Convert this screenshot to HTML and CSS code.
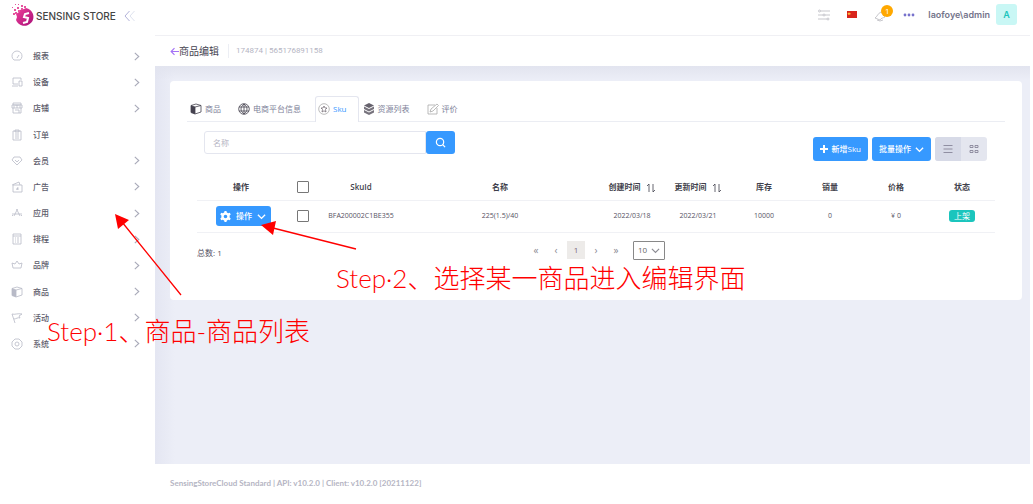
FILE: index.html
```html
<!DOCTYPE html>
<html lang="zh-CN">
<head>
<meta charset="utf-8">
<title>商品编辑 - Sensing Store</title>
<link rel="stylesheet" href="styles.css">
</head>
<body>
<svg class="defs" aria-hidden="true">
  <symbol id="right" viewBox="0 0 8 8"><path d="M2.500 .8 6 4 2.500 7.200"/></symbol>
  <symbol id="down" viewBox="0 0 8 8"><path d="M.8 2.500 4 5.700 7.200 2.500"/></symbol>
  <symbol id="box" viewBox="0 0 12 12"><path d="M1 2.500 5 4v7L1 9.500z" fill="currentColor"/><path d="M1 2.500 6 1l5 1.500L5 4M11 2.500v6.500L5 11"/></symbol>
  <symbol id="sort" viewBox="0 0 10 10"><path d="M3 9V1M1 3l2-2M7 1v8M9 7 7 9"/></symbol>
</svg>
<div class="app">
  <aside class="sidebar">
    <div class="brand">
      <svg class="logo" viewBox="0 0 24 24" aria-hidden="true">
        <defs><linearGradient id="pink" x1="0" y1="0" x2="1" y2="1"><stop offset="0" stop-color="#f0409a"/><stop offset="1" stop-color="#a80f78"/></linearGradient></defs>
        <path d="M4 10l3-2 1-2 4-1 2-1a9 9 0 1 1-10 12l1-3z" fill="url(#pink)"/>
        <path d="M2 5h2v2H2zM5 3h2v2H5zM9 1h2v2H9zM6 6h2v2H6zM1 9h2v2H1zM12 2h2v2h-2zM3 0h1v1H3zM6 0h1v1H6zM0 3h1v1H0zM3 8h2v2H3zM9 4h2v2H9z" fill="#e6559f"/>
        <path d="M17 9l-4 1 -1 3 4 1 -1 4-4 1" fill="none" stroke="#fff" stroke-width="2"/>
      </svg>
      <span class="brand-name">SENSING STORE</span>
      <button class="collapse" aria-label="收起菜单"><svg viewBox="0 0 12 12"><path d="M5.500 1 1 6l4.500 5"/><path class="faint" d="M10.500 1 6 6l4.500 5"/></svg></button>
    </div>
    <nav class="menu">
      <a href="#"><svg viewBox="0 0 12 12"><path d="M3 10a5 5 0 1 1 6 0zM6 8l2-3"/></svg><span>报表</span><svg class="chev"><use href="#right"/></svg></a>
      <a href="#"><svg viewBox="0 0 12 12"><path d="M2 8V2h8v2M1 10h6M2 8h5M8 5h3v5H8z"/></svg><span>设备</span><svg class="chev"><use href="#right"/></svg></a>
      <a href="#"><svg viewBox="0 0 12 12"><path d="M2 1h8v2H2zM1 3h10v3H1zM2 6v5h8V6M4 8h4v3M3 4v2M6 3v3M9 4v2"/></svg><span>店铺</span><svg class="chev"><use href="#right"/></svg></a>
      <a href="#"><svg viewBox="0 0 12 12"><path d="M2 2h8v9H2zM4 1h4v2H4zM4 5h4M4 7h4M4 9h4"/></svg><span>订单</span></a>
      <a href="#"><svg viewBox="0 0 12 12"><path d="M3 2h6l2 3-5 5-5-5zM4 5l2 2 2-2"/></svg><span>会员</span><svg class="chev"><use href="#right"/></svg></a>
      <a href="#"><svg viewBox="0 0 12 12"><path d="M2 4h9v7H2zM1 4l7-3 1 3M5 8h3M7 6l-1 3"/></svg><span>广告</span><svg class="chev"><use href="#right"/></svg></a>
      <a href="#"><svg viewBox="0 0 12 12"><path d="M6.500 2 3 9M5.500 2 9 9M1 7h10M1 9l1-1M11 9l-1-1"/></svg><span>应用</span><svg class="chev"><use href="#right"/></svg></a>
      <a href="#"><svg viewBox="0 0 12 12"><path d="M2 1h8v10H2zM2 3h8M4 5h1M6 5h2M4 7h1M6 7h2M4 9h1M6 9h2"/></svg><span>排程</span><svg class="chev"><use href="#right"/></svg></a>
      <a href="#"><svg viewBox="0 0 12 12"><path d="M2 9 1 4l3 1 2-3 2 3 3-1-1 5z"/></svg><span>品牌</span><svg class="chev"><use href="#right"/></svg></a>
      <a href="#"><svg><use href="#box"/></svg><span>商品</span><svg class="chev"><use href="#right"/></svg></a>
      <a href="#"><svg viewBox="0 0 12 12"><path d="M4 11 1 2c3 1 5-1 10 0L8 4l1 2c-2-1-4 1-6 1"/></svg><span>活动</span><svg class="chev"><use href="#right"/></svg></a>
      <a href="#"><svg viewBox="0 0 12 12"><path d="M4 1h4l3 3v4l-3 3H4L1 8V4z"/><circle cx="6" cy="6" r="2"/></svg><span>系统</span><svg class="chev"><use href="#right"/></svg></a>
    </nav>
  </aside>
  <div class="page">
    <header class="topbar">
      <button aria-label="设置"><svg class="sliders" viewBox="0 0 12 12"><path d="M2.500 2H12M0 6h5M7 6h5M0 10h9"/><circle cx="1.500" cy="2" r="1"/><circle cx="6" cy="6" r="1"/><circle cx="10" cy="10" r="1"/></svg></button>
      <button aria-label="语言"><svg class="flag" viewBox="0 0 10 7"><path fill="#d8241c" d="M0 0h10v7H0z"/><path fill="#fb3" d="M2 1l.5 1H4L3 3l.5 1L2 3.500 1 4v-1L.5 2h1z"/></svg></button>
      <button class="bell" aria-label="通知"><svg viewBox="0 0 12 12"><path d="M1 8c2-1 3-5 6-6l4 5c-2 1-4 1-5 3zM3 10l3 1 3-1"/></svg><span class="badge">1</span></button>
      <button aria-label="更多"><svg class="dots" viewBox="0 0 12 4"><circle cx="2" cy="2" r="1.400"/><circle cx="6" cy="2" r="1.400"/><circle cx="10" cy="2" r="1.400"/></svg></button>
      <a class="user" href="#"><span>laofoye\admin</span><span class="avatar">A</span></a>
    </header>
    <div class="subbar">
      <a href="#" class="back" aria-label="返回"><svg viewBox="0 0 8 8"><path d="M8 4H1M4 1 1 4l3 3"/></svg></a>
      <h1>商品编辑</h1>
      <span class="code">174874 | 565176891158</span>
    </div>
    <main>
      <section class="card">
        <nav class="tabs">
          <a href="#"><svg class="dark"><use href="#box"/></svg>商品</a>
          <a href="#"><svg class="dark" viewBox="0 0 12 12"><circle cx="6" cy="6" r="5.300"/><path d="M6 1v10M1 4h10M1 8h10M6 1C2 4 2 8 6 11M6 1c4 3 4 7 0 10"/></svg>电商平台信息</a>
          <a href="#" class="active"><svg viewBox="0 0 12 12"><circle cx="6" cy="6" r="5.300"/><path class="star" d="M6 3l1 2h2L7.500 6.500 8 9 6 7.800 4 9l.5-2.500L3 5h2z"/></svg>Sku</a>
          <a href="#"><svg class="dark" viewBox="0 0 12 12"><path fill="#66626d" stroke="none" d="M6 0l5 2.500L6 5 1 2.500z"/><path fill="#77737d" stroke="none" d="M1 3.500l5 2.500 5-2.500V6L6 8.500 1 6zM1 7l5 2.500L11 7v2.500L6 12 1 9.500z"/></svg>资源列表</a>
          <a href="#"><svg viewBox="0 0 12 12"><path d="M8 2H1v9h9V5M3 9l1-3 6-5 1.500 1.500L6 8z"/></svg>评价</a>
        </nav>
        <div class="tools">
          <form class="search">
            <input type="text" placeholder="名称" aria-label="名称">
            <button type="button" aria-label="搜索"><svg viewBox="0 0 12 12"><circle cx="5.500" cy="5.500" r="4"/><path d="M8.500 8.500 11 11"/></svg></button>
          </form>
          <div class="actions">
            <button class="btn"><svg class="plus" viewBox="0 0 8 8"><path d="M4 0v8M0 4h8"/></svg>新增Sku</button>
            <button class="btn">批量操作<svg><use href="#down"/></svg></button>
            <div class="views">
              <button class="on" aria-label="列表"><svg viewBox="0 0 10 10"><path d="M.5 1.500h9M.5 5h9M.5 8.500h9"/></svg></button>
              <button aria-label="网格"><svg viewBox="0 0 10 10"><path d="M1 1.500h3v2H1zM6 1.500h3v2H6zM1 6.500h3v2H1zM6 6.500h3v2H6z"/></svg></button>
            </div>
          </div>
        </div>
        <div class="data">
          <table>
            <colgroup><col class="c-op"><col class="c-check"><col class="c-sku"><col><col class="c-std"><col class="c-std"><col class="c-std"><col class="c-std"><col class="c-std"><col class="c-std"></colgroup>
            <thead><tr><th>操作</th><th><input type="checkbox" aria-label="全选"></th><th>SkuId</th><th>名称</th><th>创建时间<svg class="sort"><use href="#sort"/></svg></th><th>更新时间<svg class="sort"><use href="#sort"/></svg></th><th>库存</th><th>销量</th><th>价格</th><th>状态</th></tr></thead>
            <tbody><tr><td class="op"><button class="btn small"><svg class="gear" viewBox="0 0 12 12"><path fill-rule="evenodd" d="M5 0h2l.5 1.700 1.500.8 1.700-.5 1 1.800L10.500 5v2l1.200 1.200-1 1.800-1.700-.5-1.500.8L7 12H5l-.5-1.700L3 9.500l-1.700.5-1-1.800L1.500 7V5L.3 3.800l1-1.800 1.700.5 1.500-.8zM6 4a2 2 0 1 0 0 4 2 2 0 0 0 0-4z"/></svg>操作<svg><use href="#down"/></svg></button></td><td><input type="checkbox" aria-label="选择"></td><td>BFA200002C1BE355</td><td>225(1.5)/40</td><td>2022/03/18</td><td>2022/03/21</td><td>10000</td><td>0</td><td>¥ 0</td><td><span class="tag">上架</span></td></tr></tbody>
          </table>
          <div class="foot">
            <span class="total">总数: 1</span>
            <div class="pager">
              <button aria-label="首页">«</button><button aria-label="上一页">‹</button><button class="current">1</button><button aria-label="下一页">›</button><button aria-label="末页">»</button>
              <span class="size"><select aria-label="每页条数"><option>10</option></select><svg><use href="#down"/></svg></span>
            </div>
          </div>
        </div>
      </section>
    </main>
    <footer>SensingStoreCloud Standard | API: v10.2.0 | Client: v10.2.0 [20211122]</footer>
  </div>
</div>
<svg class="arrows" aria-hidden="true"><path class="line" d="M181 295 122 222M356 249 273 228"/><path class="head" d="M115 214 129 220 118 229zM261 225 276 221 273 235z"/></svg>
<p class="note one">Step·1、商品-商品列表</p>
<p class="note two">Step·2、选择某一商品进入编辑界面</p>
</body>
</html>
```
FILE: styles.css
```css
* { box-sizing: border-box; }
body { margin: 0; background: #fff; color: #55525f; font: 8px/12px "Open Sans", "Noto Sans CJK SC", sans-serif; }
svg { flex: none; width: 12px; height: 12px; fill: none; stroke: currentColor; }
button { border: 0; padding: 0; background: none; color: inherit; font: inherit; display: flex; align-items: center; justify-content: center; }
a { color: inherit; text-decoration: none; }
.defs { position: absolute; width: 0; height: 0; }
.app { display: grid; grid-template-columns: 155px 1fr; min-height: calc(100vh - 11px); margin-right: 3px; }

.brand { display: flex; align-items: center; height: 43px; padding: 0 0 12px 12px; }
.logo { width: 24px; height: 24px; stroke: none; }
.brand-name { color: #444; font: 500 10px/16px Inter, sans-serif; }
.collapse { margin-left: 8px; color: #b3b3da; }
.faint { stroke: #dfe3ef; }
.menu { display: flex; flex-direction: column; height: 314px; }
.menu a { flex: 1; display: flex; align-items: center; padding: 0 14px 0 11px; color: #5c5b6a; font-weight: 500; }
.menu a span { flex: 1; margin-left: 10px; }
.menu svg { color: #b8bac7; stroke-width: .8; }
.menu .chev { width: 9px; height: 9px; color: #a9aab9; stroke-width: 1; }

.page { display: flex; flex-direction: column; min-width: 0; }
.topbar { display: flex; align-items: center; justify-content: flex-end; height: 35px; padding: 0 13px 6px 0; gap: 17px; color: #b9b9bf; }
.topbar svg { stroke-width: .8; }
.topbar .flag { width: 10px; height: 7px; stroke: none; }
.bell { position: relative; }
.badge { position: absolute; left: 7px; top: -3px; width: 12px; height: 12px; border-radius: 50%; background: #ffa800; color: #fff; text-align: center; }
.bell svg { margin-top: 2px; }
.topbar .dots { width: 12px; height: 4px; fill: #7772cc; stroke: none; }
.user { display: flex; align-items: center; gap: 6px; margin-left: -4px; color: #74748b; font: 600 9px/12px Inter, sans-serif; }
.avatar { width: 21px; height: 21px; border-radius: 3px; background: #c9f7f5; color: #1bc5bd; line-height: 21px; text-align: center; }
.subbar { display: flex; align-items: center; height: 31px; padding-left: 15px; border-top: 1px solid #f0f0f4; }
.back { display: flex; color: #a472f5; }
.back svg { width: 9px; height: 9px; }
h1 { margin: 0; padding-right: 9px; border-right: 1px solid #eceef4; color: #444350; font-size: 10px; font-weight: 400; line-height: 14px; }
.code { margin-left: 7px; color: #b5b5c3; font: 400 8px/12px Roboto, sans-serif; }
main { flex: 1; padding: 15px 8px 15px 15px; background: linear-gradient(#e2e4ef, #e2e4ef00 14px), linear-gradient(90deg, #e4e6f2, #eceef7 20px); }
.card { min-height: 219px; padding: 15px 17px 0; border-radius: 4px; background: #fff; }
footer { height: 29px; padding: 13px 15px 0; color: #b5b5c3; font: 700 8px/12px Lato, sans-serif; }

.tabs { display: flex; height: 26px; border-bottom: 1px solid #ebedf3; color: #7e8299; }
.tabs a { display: flex; align-items: center; gap: 3px; height: 26px; padding: 0 12px 2px 2px; margin-right: 1px; border: 1px solid transparent; border-bottom: 0; border-radius: 3px 3px 0 0; }
.tabs svg { stroke-width: .8; color: #aaa; }
.tabs .dark { color: #45424f; }
.tabs .active { padding: 0 11px 2px 2px; background: #fff; border-color: #e4e6ef; color: #3699ff; }
.star { stroke: #776f77; }
.tools { display: flex; justify-content: space-between; padding: 9px 18px 0 17px; }
.search { display: flex; height: 23px; }
.search input { width: 222px; padding: 0 8px; border: 1px solid #e4e6ef; border-radius: 3px 0 0 3px; font: inherit; }
.search input::placeholder { color: #b5b5c3; }
.search button { width: 29px; border-radius: 3px; background: #3699ff; color: #fff; }
.search svg { width: 11px; height: 11px; stroke-width: 1.300; }
.actions { display: flex; gap: 4px; padding-top: 6px; }
.btn { height: 24px; gap: 4px; padding: 0 7px; border-radius: 3px; background: #3699ff; color: #fff; font-weight: 500; white-space: nowrap; }
.btn svg { width: 9px; height: 9px; stroke-width: 1.200; }
.btn .plus { width: 8px; height: 8px; stroke-width: 2; }
.btn .gear { width: 11px; height: 11px; fill: #fff; stroke: none; }
.views { display: flex; overflow: hidden; border-radius: 3px; background: #e4e6ef; color: #7e7b90; }
.views button { width: 26px; }
.views .on { background: #d7dae7; }
.views svg { width: 10px; height: 10px; stroke-width: .8; }
.data { padding: 13px 10px 0; }
table { width: 100%; table-layout: fixed; border-collapse: collapse; text-align: center; }
.c-op { width: 88px; }
.c-check { width: 36px; }
.c-sku { width: 80px; }
.c-std { width: 66px; }
th, td { padding: 0; border-bottom: 1px solid #f0f1f5; white-space: nowrap; }
th { height: 26px; color: #3f3f4b; font-weight: 600; }
td { height: 32px; font-size: 7px; }
td.op { padding-left: 4px; }
th input, td input { appearance: none; display: block; width: 12px; height: 12px; margin: 0 auto; border: 1px solid #777; border-radius: 1px; background: #fff; }
.sort { width: 10px; height: 10px; margin-left: 5px; stroke-width: .8; vertical-align: middle; }
.small { width: 55px; height: 20px; margin: 0 auto; gap: 5px; font-size: 8px; }
.tag { display: block; width: 26px; margin: 0 auto; border-radius: 3px; background: #1bc5bd; color: #fff; font-size: 8px; }
.foot { display: grid; grid-template-columns: 1fr auto 1fr; padding-top: 8px; }
.total { padding-top: 6px; }
.pager { display: flex; align-items: center; gap: 2px; color: #8a8a92; }
.pager button { width: 18px; height: 18px; font-size: 10px; }
.pager .current { background: #edebe9; color: #7a687c; font-size: 8px; }
.size { display: flex; align-items: center; width: 32px; height: 19px; margin-left: 6px; border: 1px solid #888; border-radius: 1px; }
.size select { appearance: none; flex: 1; min-width: 0; padding: 0 0 0 4px; border: 0; background: none; color: #666; font: inherit; }
.size svg { width: 9px; height: 9px; margin-right: 4px; }

.arrows { position: absolute; left: 0; top: 0; width: 100%; height: 100%; pointer-events: none; }
.line { stroke: #f00; stroke-width: 1.300; }
.head { fill: #f00; stroke: none; }
.note { position: absolute; margin: 0; color: #f00; font: 300 26px/36px Lato, "Noto Sans CJK SC", sans-serif; white-space: nowrap; }
.one { left: 47px; top: 313px; }
.two { left: 336px; top: 260px; }
```
